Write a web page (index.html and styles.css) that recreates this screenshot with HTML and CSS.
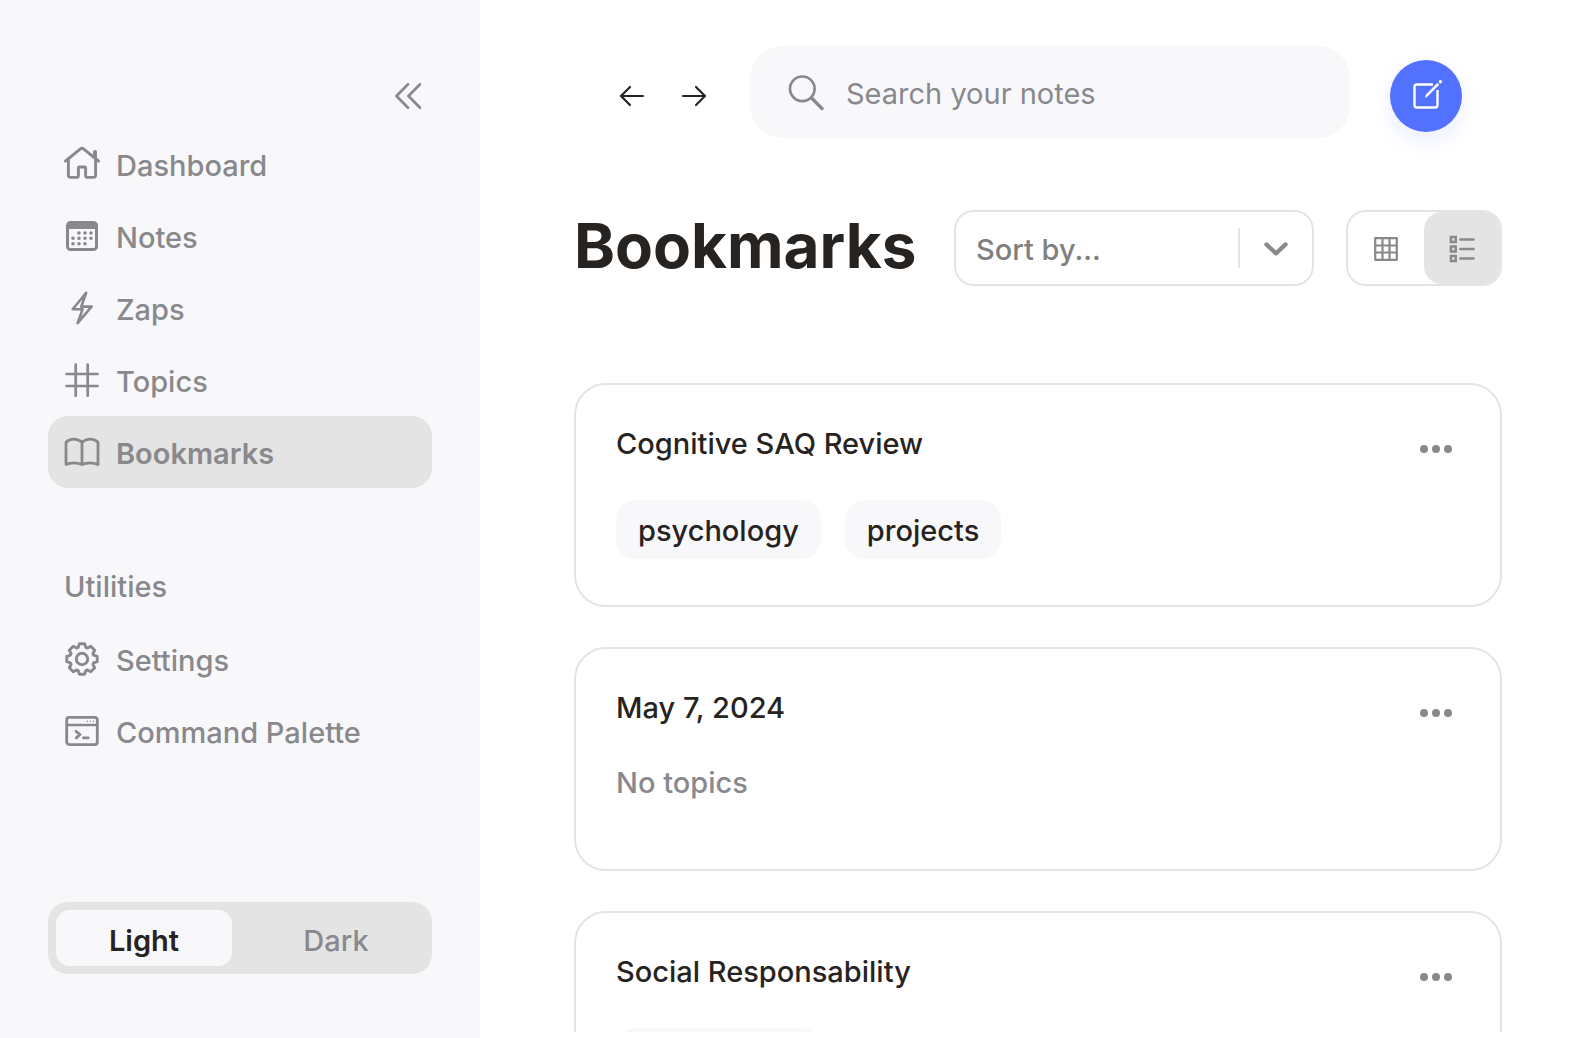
FILE: index.html
```html
<!DOCTYPE html>
<html lang="en">
<head>
<meta charset="utf-8">
<meta name="viewport" content="width=device-width, initial-scale=1">
<title>Bookmarks</title>
<link rel="stylesheet" href="styles.css">
</head>
<body>
<div class="app">
  <aside class="sidebar">
    <button class="collapse" type="button" aria-label="Collapse sidebar">
      <svg class="stroke" width="26" height="26" viewBox="0 0 26 26" stroke-width="2.7"><path d="M13 1.3 1.500 13 13 24.700M25 1.300 13.500 13 25 24.700"/></svg>
    </button>
    <nav class="nav" aria-label="Main">
      <a class="nav-link" href="#dashboard">
        <svg class="stroke" width="36" height="36" viewBox="0 0 36 36" stroke-width="2.9"><path d="M1.5 15 16.800 2.700Q18 1.700 19.200 2.700L34.500 15M4.400 13v16q0 2.400 2.400 2.400h5.600q2 0 2-2V22q0-1 1-1h5.200q1 0 1 1v7.400q0 2 2 2h5.600q2.400 0 2.400-2.400V13"/><path class="solid" d="M29 10.500V5.500Q29 4 31 4t2 1.500V14z"/></svg>
        <span>Dashboard</span>
      </a>
      <a class="nav-link" href="#notes">
        <svg class="stroke" width="36" height="36" viewBox="0 0 36 36" stroke-width="3"><rect x="3.500" y="4.500" width="29" height="27" rx="3"/><path class="solid" d="M3 5h30v6H3z"/><path stroke-width="3.600" d="M15 15h0M21 15h0M27 15h0M9 20.300h0M15 20.300h0M21 20.300h0M27 20.300h0M9 25.700h0M15 25.700h0M21 25.700h0"/></svg>
        <span>Notes</span>
      </a>
      <a class="nav-link" href="#zaps">
        <svg class="stroke" width="36" height="36" viewBox="0 0 36 36" stroke-width="2.600"><path d="M22.200 2.800 8.700 19.300H18.600L13.600 33.200 27.600 16.600H17.200z"/></svg>
        <span>Zaps</span>
      </a>
      <a class="nav-link" href="#topics">
        <svg class="stroke" width="36" height="36" viewBox="0 0 36 36" stroke-width="2.700"><path d="M11.700 2.700v31M23.700 2.700v31M2.500 12h31M2.500 24h31"/></svg>
        <span>Topics</span>
      </a>
      <a class="nav-link nav-link-active" href="#bookmarks" aria-current="page">
        <svg class="stroke" width="36" height="36" viewBox="0 0 36 36" stroke-width="2.800"><path d="M18 8.200C13.500 4 6 4 2 8.200V30.500C6.500 28.300 13.500 28.300 18 30.500 22.500 28.300 29.500 28.300 34 30.500V8.200C30 4 22.500 4 18 8.200V30.500"/></svg>
        <span>Bookmarks</span>
      </a>
    </nav>
    <h2 class="nav-heading">Utilities</h2>
    <nav class="nav" aria-label="Utilities">
      <a class="nav-link" href="#settings">
        <svg class="stroke" width="36" height="36" viewBox="-18 -18 36 36" stroke-width="2.900"><circle r="5.700"/><path d="M-3.800-11.600-2.700-15.200H2.700L3.800-11.600 5.500-10.900 8.800-12.700 12.700-8.800 10.900-5.500 11.600-3.800 15.200-2.700V2.700L11.600 3.800 10.900 5.500 12.700 8.800 8.800 12.700 5.500 10.900 3.800 11.600 2.700 15.200H-2.700L-3.800 11.600-5.500 10.900-8.800 12.700-12.700 8.800-10.900 5.500-11.600 3.800-15.200 2.700V-2.700L-11.600-3.800-10.900-5.500-12.700-8.800-8.800-12.700-5.500-10.900z"/></svg>
        <span>Settings</span>
      </a>
      <a class="nav-link" href="#commands">
        <svg class="stroke" width="36" height="36" viewBox="0 0 36 36" stroke-width="2.800"><rect x="2.700" y="4.400" width="30.600" height="27.200" rx="2.500"/><path d="M3 12h30" stroke-width="2.400"/><path d="M12 18.300 16 21.500 12.300 24.900M19.400 24.800h4.800"/><path stroke-width="1.500" d="M23.300 8.300h0M26.300 8.300h0M29.300 8.300h0"/></svg>
        <span>Command Palette</span>
      </a>
    </nav>
    <div class="theme" role="group" aria-label="Theme">
      <button class="theme-option theme-option-active" type="button" aria-pressed="true">Light</button>
      <button class="theme-option" type="button" aria-pressed="false">Dark</button>
    </div>
  </aside>

  <main class="main">
    <div class="topbar">
      <div class="history">
        <button type="button" aria-label="Back">
          <svg class="stroke" width="26" height="26" viewBox="0 0 26 26" stroke-width="2.200"><path d="M24 13H2M11 4 2 13 11 22"/></svg>
        </button>
        <button type="button" aria-label="Forward">
          <svg class="stroke" width="26" height="26" viewBox="0 0 26 26" stroke-width="2.200"><path d="M2 13H24M15 4 24 13 15 22"/></svg>
        </button>
      </div>
      <label class="search">
        <svg class="stroke" width="36" height="36" viewBox="0 0 36 36" stroke-width="2.700"><circle cx="14.300" cy="13.800" r="12.300"/><path stroke-width="3.400" d="M23.500 23 34 33.500"/></svg>
        <input type="search" placeholder="Search your notes" aria-label="Search your notes">
      </label>
      <button class="create" type="button" aria-label="New note">
        <svg class="stroke" width="36" height="36" viewBox="0 1 36 36" stroke-width="2.400"><path stroke-linecap="butt" d="M25 7.500H9Q6.500 7.500 6.500 10V28Q6.500 30.500 9 30.500H27Q29.500 30.500 29.500 28V13"/><path class="solid" d="M16.800 21.200 18.200 17.200 29 6.200Q30.800 6 31 8L20 19z"/><path stroke-width="3.400" d="M32.400 4.800h0"/></svg>
      </button>
    </div>

    <header class="page-head">
      <h1>Bookmarks</h1>
      <div class="sort">
        <select aria-label="Sort by">
          <option>Sort by...</option>
          <option>Title</option>
          <option>Date</option>
        </select>
        <span class="sort-arrow">
          <svg class="stroke" width="24" height="14" viewBox="0 0 24 14" stroke-width="4.200"><path d="M2.400 2.400 12 11.400 21.600 2.400"/></svg>
        </span>
      </div>
      <div class="view" role="group" aria-label="View">
        <button class="view-option" type="button" aria-label="Grid" aria-pressed="false">
          <svg class="stroke" width="24" height="24" viewBox="0 0 24 24" stroke-width="2.200"><path d="M1.200 1.200H22.800V22.800H1.200zM8.500 1V23M15.500 1V23M1 8.500H23M1 15.500H23"/></svg>
        </button>
        <button class="view-option view-option-active" type="button" aria-label="List" aria-pressed="true">
          <svg class="stroke" width="26" height="28" viewBox="0 0 26 28" stroke-width="2.500"><path d="M11.400 4.500H24.500M11.400 14H24.500M11.400 23.500H24.500"/><path stroke-linejoin="miter" d="M1.900 2.100h4.800v4.800H1.900zM1.900 11.600h4.800v4.800H1.900zM1.900 21.100h4.800v4.800H1.900z"/></svg>
        </button>
      </div>
    </header>

    <div class="cards">
      <article class="card">
        <div class="card-head">
          <h2>Cognitive SAQ Review</h2>
          <button class="more" type="button" aria-label="More options"><svg width="32" height="8" viewBox="0 0 32 8" fill="currentColor"><circle cx="4" cy="4" r="4"/><circle cx="16" cy="4" r="4"/><circle cx="28" cy="4" r="4"/></svg></button>
        </div>
        <div class="topics"><a class="topic" href="#psychology">psychology</a><a class="topic" href="#projects">projects</a></div>
      </article>
      <article class="card">
        <div class="card-head">
          <h2>May 7, 2024</h2>
          <button class="more" type="button" aria-label="More options"><svg width="32" height="8" viewBox="0 0 32 8" fill="currentColor"><circle cx="4" cy="4" r="4"/><circle cx="16" cy="4" r="4"/><circle cx="28" cy="4" r="4"/></svg></button>
        </div>
        <div class="topics"><p>No topics</p></div>
      </article>
      <article class="card">
        <div class="card-head">
          <h2>Social Responsability</h2>
          <button class="more" type="button" aria-label="More options"><svg width="32" height="8" viewBox="0 0 32 8" fill="currentColor"><circle cx="4" cy="4" r="4"/><circle cx="16" cy="4" r="4"/><circle cx="28" cy="4" r="4"/></svg></button>
        </div>
        <div class="topics"><a class="topic" href="#psychology">psychology</a></div>
      </article>
    </div>
  </main>
</div>
</body>
</html>
```
FILE: styles.css
```css
:root {
  --ink: #272321;
  --muted: #89898d;
  --line: #e4e4e4;
  --soft: #f8f8fb;
}

* {
  box-sizing: border-box;
}

body,
h1,
h2,
p {
  margin: 0;
}

body {
  background: #fff;
  color: var(--ink);
  font: 500 29px/36px Inter, "Liberation Sans", sans-serif;
}

a {
  color: inherit;
  text-decoration: none;
}

button,
input,
select {
  margin: 0;
  padding: 0;
  border: 0;
  background: none;
  color: inherit;
  font: inherit;
}

button {
  cursor: pointer;
}

svg {
  display: block;
  flex: none;
}

.stroke {
  fill: none;
  stroke: currentColor;
  stroke-linecap: round;
  stroke-linejoin: round;
}

.solid {
  fill: currentColor;
  stroke-width: 0;
}

.app {
  display: flex;
  height: 100vh;
}

/* Sidebar */
.sidebar {
  display: flex;
  flex: none;
  flex-direction: column;
  width: 480px;
  padding: 83px 48px 64px;
  background: var(--soft);
  color: var(--muted);
}

.collapse {
  align-self: flex-end;
  margin: 0 11px 19px;
}

.nav-link {
  display: flex;
  align-items: center;
  gap: 16px;
  height: 72px;
  padding: 0 16px;
  border-radius: 20px;
}

.nav-link span {
  padding-top: 4px;
}

.nav-link-active {
  background: var(--line);
  font-weight: 600;
}

.nav-heading {
  margin: 81px 16px 18px;
  font-size: 29px;
  font-weight: 500;
}

.theme {
  display: grid;
  grid-template-columns: 1fr 1fr;
  gap: 16px;
  margin-top: auto;
  padding: 8px;
  border-radius: 20px;
  background: var(--line);
}

.theme-option {
  height: 56px;
  padding-top: 6px;
  border-radius: 14px;
}

.theme-option-active {
  background: var(--soft);
  color: var(--ink);
  font-weight: 600;
}

/* Main column */
.main {
  display: flex;
  flex: 1;
  flex-direction: column;
  min-width: 0;
  padding: 46px 94px 6px;
}

.topbar {
  display: flex;
  align-items: center;
  padding: 0 40px 0 45px;
}

.history {
  display: flex;
  gap: 36px;
  margin: 8px 43px 0 0;
}

.search {
  display: flex;
  flex: 1;
  align-items: center;
  gap: 22px;
  min-width: 0;
  height: 92px;
  padding: 2px 38px 0;
  border-radius: 32px;
  background: var(--soft);
  color: var(--muted);
}

.search input {
  flex: 1;
  min-width: 0;
  height: 48px;
  outline: 0;
  font-weight: 400;
}

.search input::placeholder {
  color: var(--muted);
  opacity: 1;
}

.create {
  display: grid;
  place-items: center;
  width: 72px;
  height: 72px;
  margin: 8px 0 0 40px;
  border-radius: 50%;
  background: #5271ff;
  box-shadow: 0 8px 20px rgba(82, 113, 255, .12);
  color: #fff;
}

.page-head {
  display: flex;
  align-items: center;
  gap: 32px;
  margin: 72px 0 97px;
}

.page-head h1 {
  flex: 1;
  padding-bottom: 4px;
  font-size: 62px;
  font-weight: 700;
  line-height: 72px;
}

.sort {
  position: relative;
  width: 360px;
  color: var(--muted);
}

.sort select {
  display: block;
  width: 100%;
  height: 76px;
  padding: 4px 92px 0 20px;
  border: 2px solid var(--line);
  border-radius: 20px;
  appearance: none;
  color: #808080;
}

.sort-arrow {
  position: absolute;
  top: 18px;
  right: 2px;
  display: grid;
  place-items: center;
  width: 74px;
  height: 40px;
  padding-top: 2px;
  border-left: 2px solid var(--line);
  pointer-events: none;
}

.view {
  display: flex;
  border: 2px solid var(--line);
  border-radius: 20px;
  color: var(--muted);
}

.view-option {
  display: grid;
  place-items: center;
  width: 76px;
  height: 72px;
  padding-top: 2px;
  border-radius: 18px;
}

.view-option-active {
  background: var(--line);
}

/* Note cards */
.cards {
  display: flex;
  flex: 1;
  flex-direction: column;
  gap: 40px;
  min-height: 0;
  overflow: auto;
  scrollbar-width: none;
}

.card {
  flex: none;
  padding: 41px 48px 46px 40px;
  border: 2px solid var(--line);
  border-radius: 32px;
}

.card-head {
  display: flex;
  align-items: flex-end;
  justify-content: space-between;
  margin-bottom: 38px;
}

.card-head h2 {
  font-size: 29px;
  font-weight: 500;
}

.more {
  display: grid;
  place-items: center;
  height: 26px;
  color: var(--muted);
}

.topics {
  display: flex;
  align-items: flex-start;
  gap: 24px;
  min-height: 59px;
  color: var(--muted);
}

.topics p {
  padding-top: 1px;
}

.topic {
  padding: 13px 22px 10px;
  border-radius: 20px;
  background: var(--soft);
  color: var(--ink);
}
```
